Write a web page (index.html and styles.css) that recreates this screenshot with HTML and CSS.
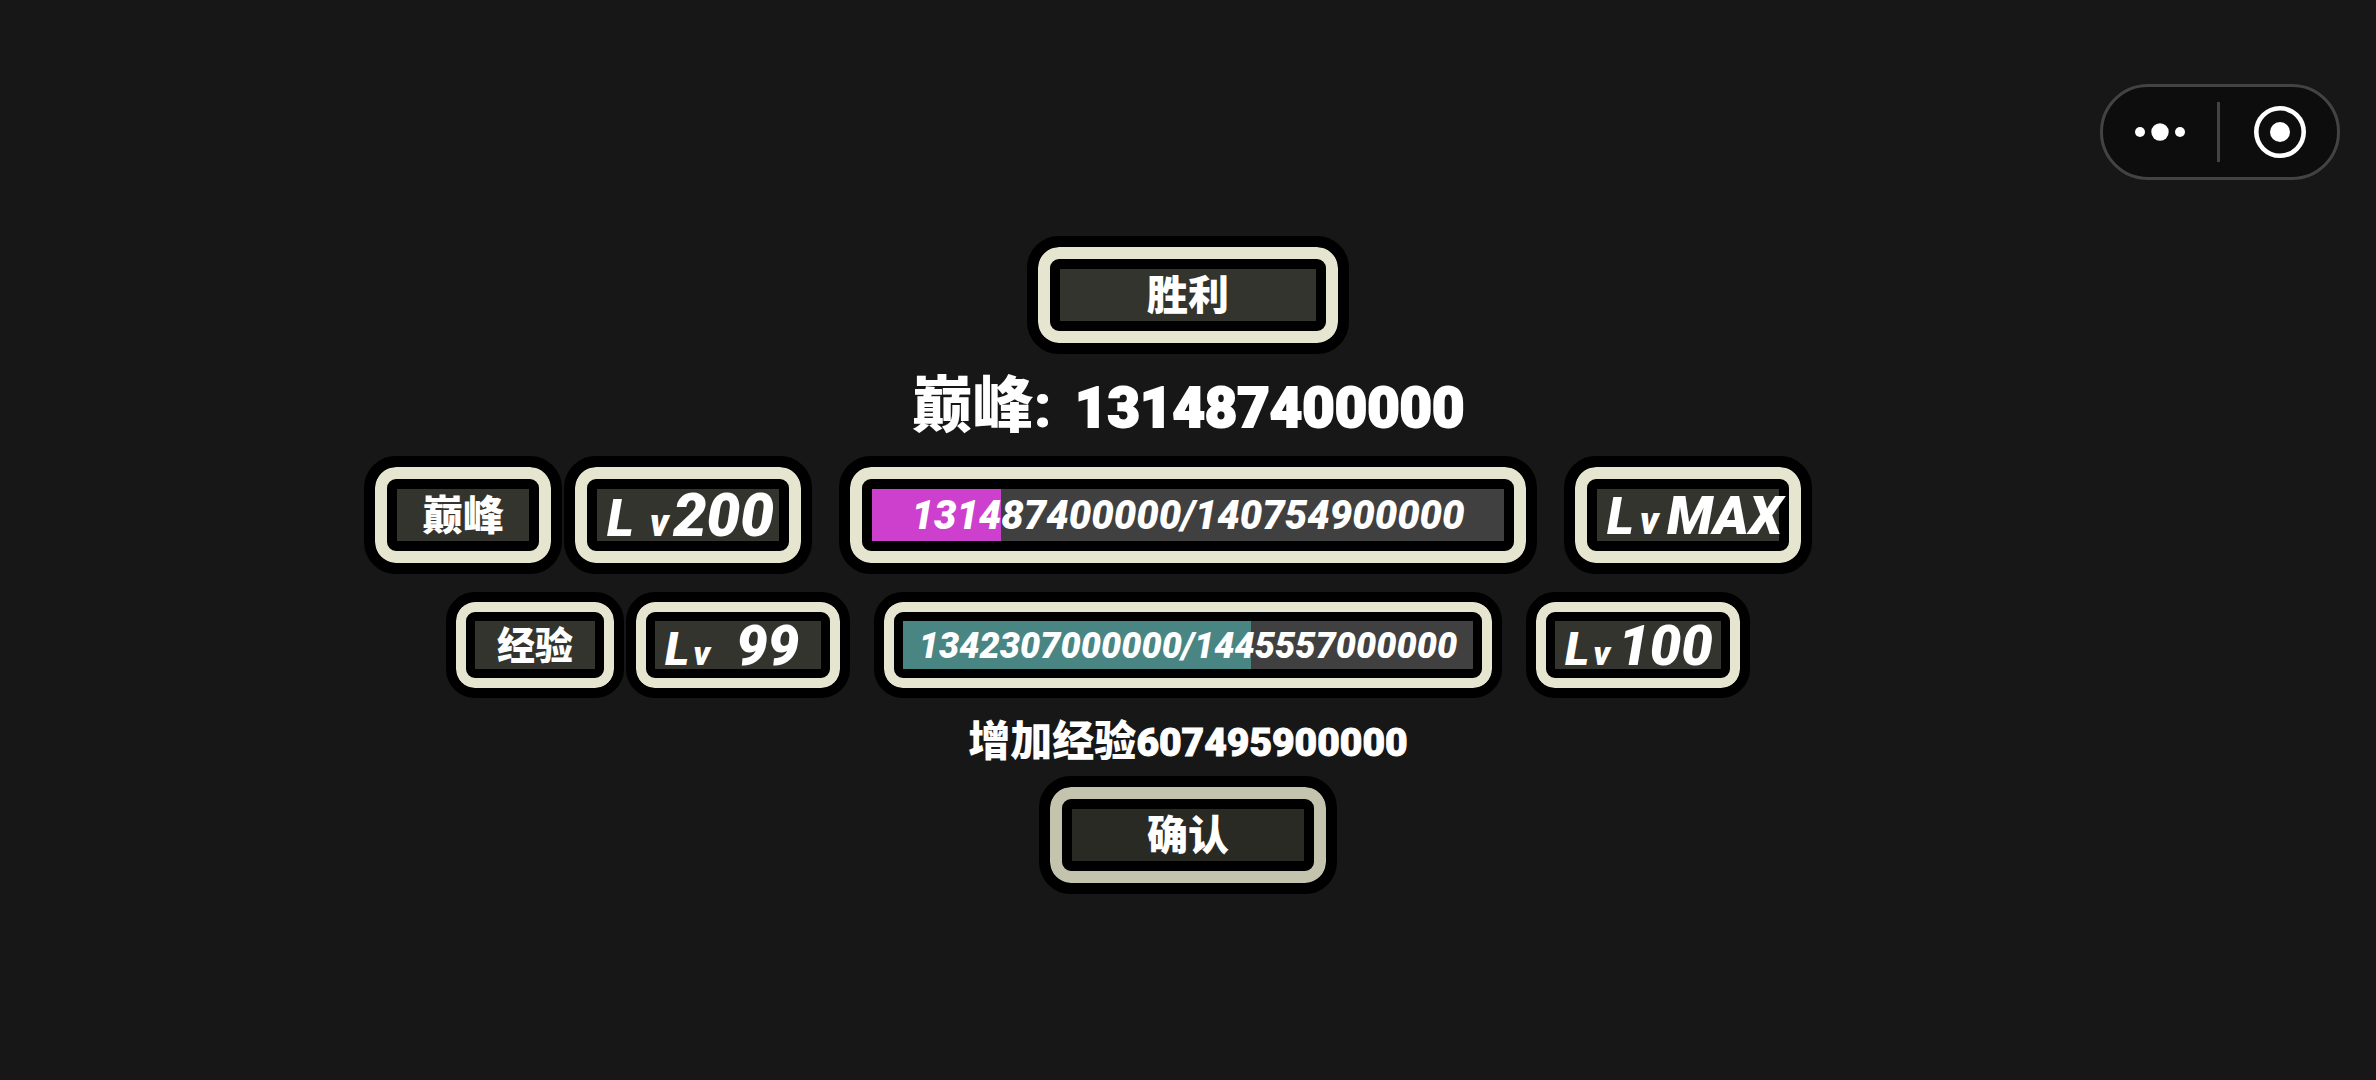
FILE: index.html
```html
<!DOCTYPE html>
<html lang="zh-CN">
<head>
  <meta charset="UTF-8">
  <meta name="viewport" content="width=device-width, initial-scale=1.0">
  <title>胜利</title>
  <link rel="stylesheet" href="styles.css">
</head>
<body>
  <div class="capsule">
    <button class="capsule-btn" type="button" aria-label="更多">
      <svg width="60" height="60" viewBox="0 0 60 60" fill="#fff">
        <circle cx="10" cy="30" r="5"/>
        <circle cx="30" cy="30" r="8.7"/>
        <circle cx="50" cy="30" r="5"/>
      </svg>
    </button>
    <span class="capsule-line"></span>
    <button class="capsule-btn" type="button" aria-label="关闭">
      <svg width="60" height="60" viewBox="0 0 60 60">
        <circle cx="30" cy="30" r="23.7" fill="none" stroke="#fff" stroke-width="4.6"/>
        <circle cx="30" cy="30" r="10" fill="#fff"/>
      </svg>
    </button>
  </div>

  <main class="result">
    <h1 class="frame frame-title">胜利</h1>

    <p class="peak">巅峰: <span class="digits">131487400000</span></p>

    <!-- 巅峰等级 -->
    <div class="row row-peak">
      <div class="frame frame-name">巅峰</div>
      <div class="frame level level-wide"><span class="l">L</span><span class="v">v</span><span class="num">200</span></div>
      <div class="frame bar" role="progressbar" aria-label="巅峰" aria-valuenow="20">
        <div class="bar-fill" style="width: 20.4%"></div>
        <span class="bar-text">131487400000/140754900000</span>
      </div>
      <div class="frame level"><span class="l">L</span><span class="v">v</span><span class="num max">MAX</span></div>
    </div>

    <!-- 普通经验 -->
    <div class="row row-exp">
      <div class="frame frame-name">经验</div>
      <div class="frame level level-two"><span class="l">L</span><span class="v">v</span><span class="num">99</span></div>
      <div class="frame bar" role="progressbar" aria-label="经验" aria-valuenow="61">
        <div class="bar-fill" style="width: 61%"></div>
        <span class="bar-text">1342307000000/1445557000000</span>
      </div>
      <div class="frame level"><span class="l">L</span><span class="v">v</span><span class="num">100</span></div>
    </div>

    <p class="gain">增加经验<span class="digits">607495900000</span></p>

    <button class="frame frame-confirm" type="button">确认</button>
  </main>
</body>
</html>
```
FILE: styles.css
```css
* {
  box-sizing: border-box;
}

body {
  margin: 0;
  min-height: 100vh;
  background-color: #171717;
  color: #fff;
  font-family: Roboto, "Noto Sans CJK SC", sans-serif;
  font-weight: 900;
}

h1,
p {
  margin: 0;
}

/* 右上角胶囊按钮 */
.capsule {
  position: absolute;
  top: 84px;
  right: 36px;
  display: flex;
  align-items: center;
  width: 240px;
  height: 96px;
  border: 3px solid #434343;
  border-radius: 48px;
  background-color: #0d0d0d;
}

.capsule-btn {
  flex: 1;
  display: flex;
  justify-content: center;
  padding: 0;
  border: none;
  background: none;
  cursor: pointer;
}

.capsule-line {
  width: 3px;
  height: 60px;
  margin-right: 3px;
  background-color: #434343;
}

.result {
  display: flex;
  flex-direction: column;
  align-items: center;
  padding-top: 236px;
}

/* 黑-米-黑三层边框 */
.frame {
  --ring: #e6e6d0;
  --fill: #33342d;
  height: 118px;
  padding: 22px;
  border: 11px solid #000;
  border-radius: 32px;
  background: linear-gradient(var(--fill), var(--fill)) content-box, #000;
  box-shadow: inset 0 0 0 12px var(--ring);
  color: #fff;
  font-family: inherit;
  font-size: 41px;
  font-weight: 900;
  line-height: 54px;
  text-align: center;
  white-space: nowrap;
}

.frame-title {
  width: 322px;
}

.frame-confirm {
  --ring: #c3c3ae;
  --fill: #2a2a25;
  width: 298px;
  cursor: pointer;
}

.peak {
  height: 102px;
  font-size: 61px;
  line-height: 104px;
}

.digits {
  -webkit-text-stroke: 2px #fff;
}

.peak .digits {
  margin-left: 8px;
  font-size: 56px;
}

.gain {
  height: 78px;
  font-size: 42px;
  line-height: 88px;
}

.gain .digits {
  font-size: 39px;
  -webkit-text-stroke-width: 1px;
}

.row {
  display: flex;
}

.row-peak {
  margin-right: 200px;
}

.row-exp {
  margin-top: 18px;
  margin-right: 180px;
}

.frame-name {
  width: 198px;
  margin-right: 2px;
}

/* 等级 */
.level {
  display: flex;
  align-items: baseline;
  width: 248px;
  font-style: italic;
}

.level .l {
  margin-left: 10px;
  font-size: 51px;
}

.level .v {
  margin-left: 6px;
  font-size: 38px;
}

.level .num {
  margin-left: 8px;
  font-size: 60px;
}

.level .max {
  font-size: 54px;
}

.level-wide .v {
  margin-left: 16px;
}

.level-wide .num {
  margin-left: 4px;
}

/* 进度条 */
.bar {
  --fill: #404040;
  display: grid;
  grid-template-rows: 100%;
  justify-items: center;
  width: 698px;
  margin: 0 27px;
  font-size: 40px;
  font-style: italic;
}

.bar-fill,
.bar-text {
  grid-area: 1 / 1;
}

.bar-fill {
  justify-self: start;
  background-color: #cd3fcd;
}

/* 第二行整体小一号 */
.row-exp .frame {
  height: 106px;
  padding: 19px;
  border-width: 10px;
  border-radius: 29px;
  box-shadow: inset 0 0 0 10px var(--ring);
  font-size: 38px;
  line-height: 50px;
}

.row-exp .frame-name {
  width: 178px;
}

.row-exp .level {
  width: 224px;
}

.row-exp .level .l {
  font-size: 46px;
}

.row-exp .level .v {
  margin-left: 4px;
  font-size: 34px;
}

.row-exp .level .num {
  font-size: 56px;
}

.row-exp .level-two .num {
  margin-left: 26px;
}

.row-exp .bar {
  width: 628px;
  margin: 0 24px;
  font-size: 36px;
}

.row-exp .bar-fill {
  background-color: #488583;
}
```
